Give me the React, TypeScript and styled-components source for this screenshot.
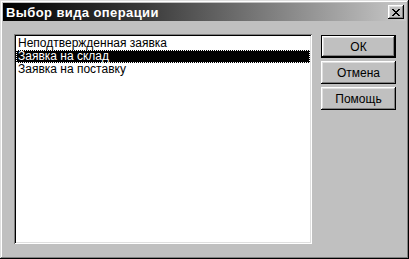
import React from "react";
import styled, { createGlobalStyle } from "styled-components";

const GlobalStyle = createGlobalStyle`
  html, body {
    margin: 0;
    padding: 0;
    background: #c0c0c0;
  }
  body {
    font-family: "Liberation Sans Narrow", "Liberation Sans", Arial, sans-serif;
  }
`;

const WindowSc = styled.div`
  width: 409px;
  height: 259px;
  box-sizing: border-box;
  background: #c0c0c0;
  padding: 3px;
  display: flex;
  flex-direction: column;
  box-shadow:
    inset -1px -1px 0 #000,
    inset 1px 1px 0 #dfdfdf,
    inset -2px -2px 0 #808080,
    inset 2px 2px 0 #fff;
`;

const TitleBarSc = styled.div`
  height: 18px;
  display: flex;
  align-items: center;
  justify-content: space-between;
  padding: 0 2px 0 3px;
  background: linear-gradient(to right, #000 0%, #3a3a3a 35%, #c8c8c8 100%);
`;

const TitleSc = styled.span`
  color: #fff;
  font-weight: bold;
  font-size: 13px;
  letter-spacing: 0.4px;
`;

const CloseBtnSc = styled.div`
  width: 16px;
  height: 14px;
  box-sizing: border-box;
  background: #c0c0c0;
  display: flex;
  align-items: center;
  justify-content: center;
  box-shadow:
    inset -1px -1px 0 #000,
    inset 1px 1px 0 #fff,
    inset -2px -2px 0 #808080,
    inset 2px 2px 0 #dfdfdf;
`;

const BodySc = styled.div`
  flex: 1;
  display: grid;
  grid-template-columns: 298px 75px;
  column-gap: 9px;
  padding: 13px 0 0 11px;
`;

const ListSc = styled.div`
  height: 210px;
  box-sizing: border-box;
  background: #fff;
  padding: 3px 2px 2px 2px;
  box-shadow:
    inset 1px 1px 0 #808080,
    inset -1px -1px 0 #fff,
    inset 2px 2px 0 #000,
    inset -2px -2px 0 #dfdfdf;
`;

const ItemSc = styled.div<{ $selected?: boolean }>`
  height: 13px;
  line-height: 13px;
  font-size: 12px;
  padding-left: 2px;
  white-space: nowrap;
  overflow: hidden;
  box-sizing: border-box;
  color: ${p => (p.$selected ? "#fff" : "#000")};
  background: ${p => (p.$selected ? "#000" : "transparent")};
  outline: ${p => (p.$selected ? "1px dotted #fff" : "none")};
  outline-offset: -1px;
`;

const ButtonsSc = styled.div`
  display: flex;
  flex-direction: column;
  gap: 3px;
  padding-top: 1px;
`;

const ButtonSc = styled.div<{ $default?: boolean }>`
  width: 75px;
  height: 23px;
  box-sizing: border-box;
  display: flex;
  align-items: center;
  justify-content: center;
  font-size: 12px;
  color: #000;
  background: #c0c0c0;
  border: ${p => (p.$default ? "1px solid #000" : "none")};
  box-shadow:
    inset -1px -1px 0 #000,
    inset 1px 1px 0 #fff,
    inset -2px -2px 0 #808080,
    inset 2px 2px 0 #dfdfdf;
`;

const CloseIcon = () => (
  <svg width="8" height="7" viewBox="0 0 8 7" shapeRendering="crispEdges">
    <path
      d="M0 0h2v1h-2zM6 0h2v1h-2zM1 1h2v1h-2zM5 1h2v1h-2zM2 2h4v1h-4zM3 3h2v1h-2zM2 4h4v1h-4zM1 5h2v1h-2zM5 5h2v1h-2zM0 6h2v1h-2zM6 6h2v1h-2z"
      fill="#000"
    />
  </svg>
);

const items = ["Неподтвержденная заявка", "Заявка на склад", "Заявка на поставку"];

const App = () => {
  return (
    <>
      <GlobalStyle />
      <WindowSc>
        <TitleBarSc>
          <TitleSc>Выбор вида операции</TitleSc>
          <CloseBtnSc>
            <CloseIcon />
          </CloseBtnSc>
        </TitleBarSc>
        <BodySc>
          <ListSc>
            {items.map((it, i) => (
              <ItemSc key={it} $selected={i === 1}>
                {it}
              </ItemSc>
            ))}
          </ListSc>
          <ButtonsSc>
            <ButtonSc $default>ОК</ButtonSc>
            <ButtonSc>Отмена</ButtonSc>
            <ButtonSc>Помощь</ButtonSc>
          </ButtonsSc>
        </BodySc>
      </WindowSc>
    </>
  );
};

export default App;
